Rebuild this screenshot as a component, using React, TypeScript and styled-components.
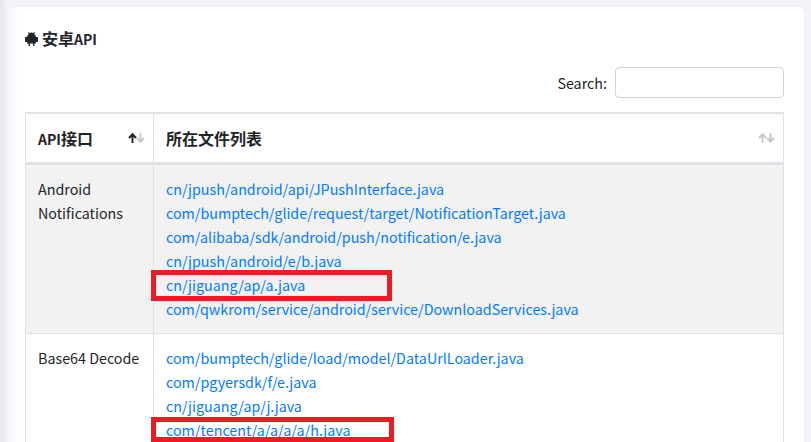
import React from 'react';
import styled, { createGlobalStyle } from 'styled-components';

const GlobalStyle = createGlobalStyle`
    html, body {
        margin: 0;
        height: 100%;
        overflow: hidden;
        background: #f3f4f9;
    }
    body {
        font-family: "Noto Sans CJK SC", "Noto Sans", sans-serif;
        font-size: 14.3px;
        color: #212529;
    }
`;

interface ApiRow {
    name: string[];
    files: string[];
    marked?: string;
}

const rows: ApiRow[] = [
    {
        name: ['Android', 'Notifications'],
        files: [
            'cn/jpush/android/api/JPushInterface.java',
            'com/bumptech/glide/request/target/NotificationTarget.java',
            'com/alibaba/sdk/android/push/notification/e.java',
            'cn/jpush/android/e/b.java',
            'cn/jiguang/ap/a.java',
            'com/qwkrom/service/android/service/DownloadServices.java',
        ],
        marked: 'cn/jiguang/ap/a.java',
    },
    {
        name: ['Base64 Decode'],
        files: [
            'com/bumptech/glide/load/model/DataUrlLoader.java',
            'com/pgyersdk/f/e.java',
            'cn/jiguang/ap/j.java',
            'com/tencent/a/a/a/a/h.java',
        ],
        marked: 'com/tencent/a/a/a/a/h.java',
    },
];

const SortArrows: React.FC<{ active?: boolean }> = ({ active }) => (
    <SortIcon viewBox="0 0 17 10" aria-hidden="true">
        <path
            d="M4.5 10V1.5M1 5 4.5 1.2 8 5"
            fill="none"
            stroke={active ? '#212529' : '#c9c9c9'}
            strokeWidth="2"
        />
        <path d="M12.5 0v8.5M9 5l3.5 3.8L16 5" fill="none" stroke="#c9c9c9" strokeWidth="2" />
    </SortIcon>
);

const AndroidIcon = () => (
    <TitleIcon viewBox="0 0 13 15" aria-hidden="true">
        <path
            d="M3.4 1 4.6 2a4.4 4.4 0 0 1 3.8 0L9.6 1l.5.5-1 1.2A5 5 0 0 1 11 6h1.3a.7.7 0 0 1 .7.7v3.6a.7.7 0 0 1-.7.7H11v1.4H9.4V15H8v-2.6H5V15H3.6v-2.6H2V11H.7a.7.7 0 0 1-.7-.7V6.7A.7.7 0 0 1 .7 6H2a5 5 0 0 1 1.9-3.3l-1-1.2z"
            fill="#212529"
        />
    </TitleIcon>
);

export default function App() {
    return (
        <Page>
            <GlobalStyle />
            <Card>
                <CardTitle>
                    <AndroidIcon />
                    <span>
                        安卓<Latin>API</Latin>
                    </span>
                </CardTitle>
                <SearchRow>
                    <label htmlFor="search">Search:</label>
                    <SearchInput id="search" type="search" />
                </SearchRow>
                <Table>
                    <colgroup>
                        <col style={{ width: 128 }} />
                        <col />
                    </colgroup>
                    <thead>
                        <tr>
                            <HeadCell>
                                <HeadInner>
                                    <span>
                                        <Latin>API</Latin>接口
                                    </span>
                                    <SortArrows active />
                                </HeadInner>
                            </HeadCell>
                            <HeadCell>
                                <HeadInner>
                                    所在文件列表
                                    <SortArrows />
                                </HeadInner>
                            </HeadCell>
                        </tr>
                    </thead>
                    <tbody>
                        {rows.map((row, i) => (
                            <Row key={row.name.join(' ')} $striped={i % 2 === 0}>
                                <Cell>
                                    {row.name.map((part) => (
                                        <div key={part}>{part}</div>
                                    ))}
                                </Cell>
                                <Cell>
                                    {row.files.map((file) => (
                                        <FileLine key={file}>
                                            <FileLink href="#">{file}</FileLink>
                                            {file === row.marked && (
                                                <Marker $first={i === 0} />
                                            )}
                                        </FileLine>
                                    ))}
                                </Cell>
                            </Row>
                        ))}
                    </tbody>
                </Table>
            </Card>
        </Page>
    );
}

const Page = styled.div`
    height: 442px;
    overflow: hidden;
    padding: 7px 7px 0 5px;
    box-sizing: border-box;
    background: linear-gradient(to right, #e6e8ec 0, #eceef2 5px, #f3f4f9 5px);
`;

const Card = styled.div`
    background: #fff linear-gradient(to right, #f0f1f4 0, #fff 14px);
    border-radius: 5px;
    padding: 21px 20px 20px;
    box-shadow: 0 0 1px rgba(0, 0, 0, 0.14);
`;

const CardTitle = styled.div`
    display: flex;
    align-items: center;
    gap: 4px;
    height: 20px;
    font-size: 16px;
    font-weight: 700;
    color: #212529;
`;

const Latin = styled.span`
    font-size: 14px;
`;

const TitleIcon = styled.svg`
    width: 13px;
    height: 15px;
`;

const SearchRow = styled.div`
    display: flex;
    justify-content: flex-end;
    align-items: center;
    gap: 8px;
    margin-top: 19px;
`;

const SearchInput = styled.input`
    width: 169px;
    height: 31px;
    box-sizing: border-box;
    border: 1px solid #ced4da;
    border-radius: 4px;
    background: #fff;
    outline: none;
    appearance: none;
`;

const Table = styled.table`
    width: 100%;
    margin-top: 14px;
    border-collapse: collapse;
    table-layout: fixed;
    border: 1px solid #dee2e6;
    border-top: 2px solid #dee2e6;
`;

const HeadCell = styled.th`
    padding: 0 12px;
    height: 48px;
    border-left: 1px solid #dee2e6;
    border-bottom: 3px solid #dee2e6;
    font-size: 16px;
    font-weight: 700;
    text-align: left;
    color: #212529;
`;

const HeadInner = styled.div`
    display: flex;
    align-items: center;
    justify-content: space-between;
`;

const SortIcon = styled.svg`
    width: 17px;
    height: 10px;
    margin-right: -4px;
    flex-shrink: 0;
`;

const Row = styled.tr<{ $striped: boolean }>`
    background: ${(p) => (p.$striped ? '#f2f2f2' : '#fff')};
`;

const Cell = styled.td`
    padding: 12px 12px 11.5px;
    border: 1px solid #dee2e6;
    vertical-align: top;
    line-height: 24px;
`;

const FileLine = styled.div`
    position: relative;
`;

const FileLink = styled.a`
    color: #007bff;
    text-decoration: none;
`;

const Marker = styled.span<{ $first: boolean }>`
    position: absolute;
    left: -15px;
    top: ${(p) => (p.$first ? '-3px' : '-1px')};
    width: ${(p) => (p.$first ? '241px' : '243px')};
    height: ${(p) => (p.$first ? '31px' : '25px')};
    box-sizing: border-box;
    border: 5px solid #ed1c24;
    pointer-events: none;
`;
